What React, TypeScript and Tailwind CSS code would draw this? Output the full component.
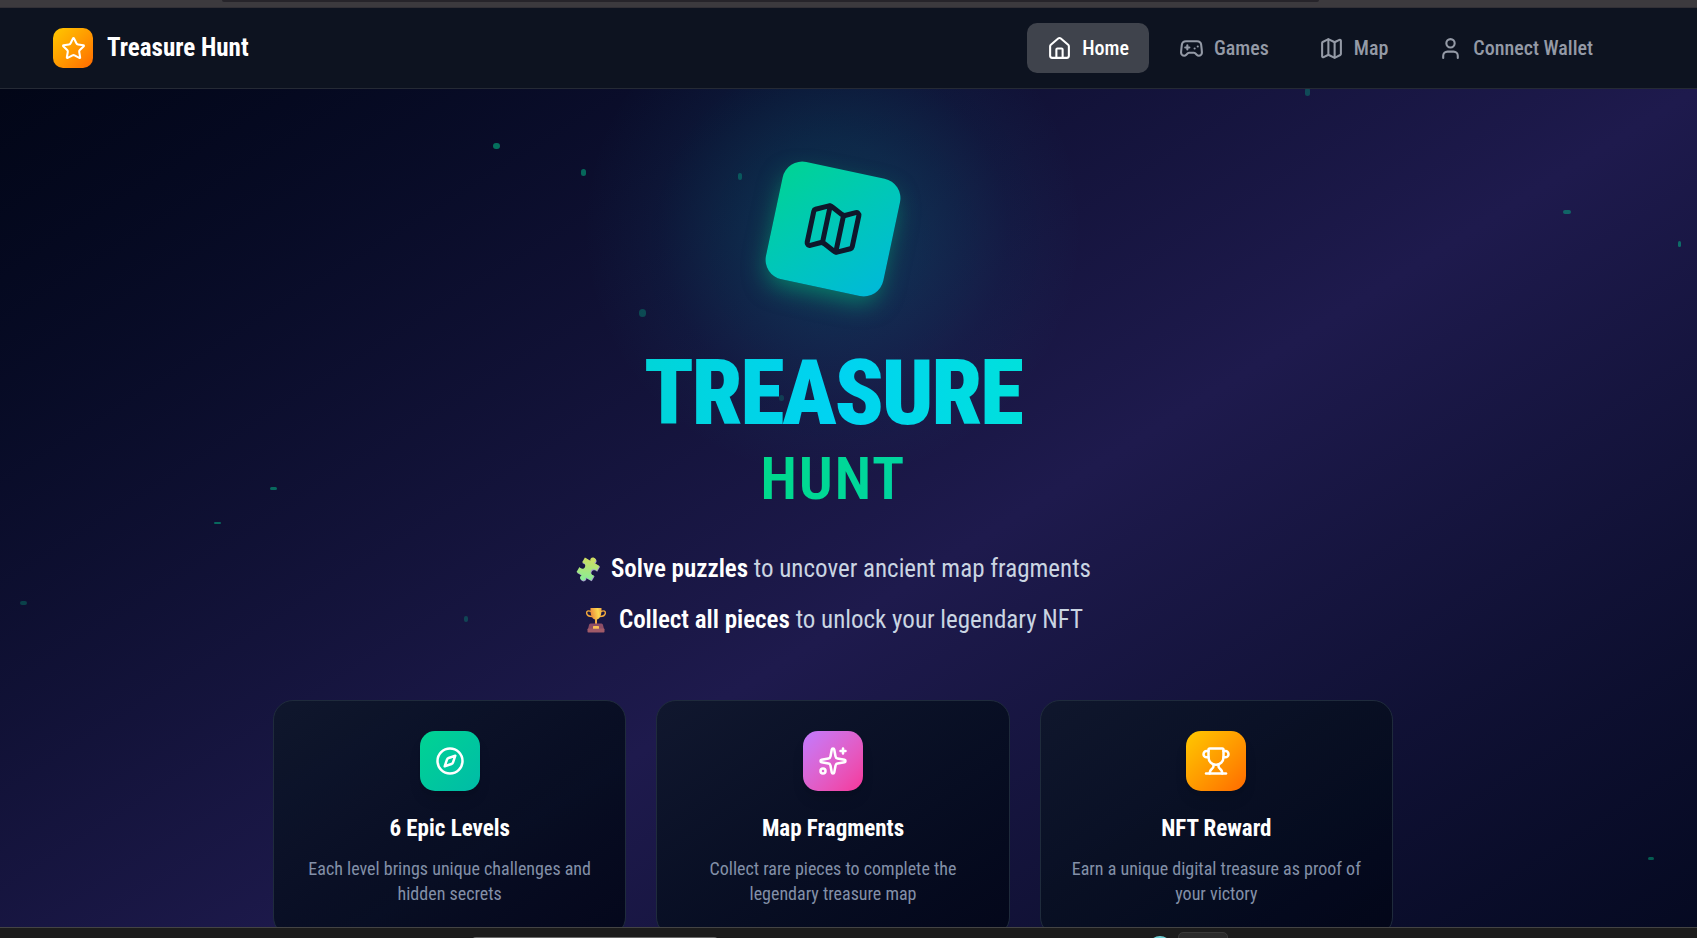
import {
  Compass,
  Gamepad2,
  House,
  Map as MapIcon,
  Sparkles,
  Star,
  Trophy,
  User,
  type LucideIcon,
} from "lucide-react";

type NavItem = { label: string; icon: LucideIcon; active?: boolean };

const navItems: NavItem[] = [
  { label: "Home", icon: House, active: true },
  { label: "Games", icon: Gamepad2 },
  { label: "Map", icon: MapIcon },
  { label: "Connect Wallet", icon: User },
];

const features = [
  {
    title: "6 Epic Levels",
    text: "Each level brings unique challenges and hidden secrets",
    icon: Compass,
    tile: "from-[#00d492] to-[#00bba7]",
  },
  {
    title: "Map Fragments",
    text: "Collect rare pieces to complete the legendary treasure map",
    icon: Sparkles,
    tile: "from-[#c27aff] to-[#f6339a]",
  },
  {
    title: "NFT Reward",
    text: "Earn a unique digital treasure as proof of your victory",
    icon: Trophy,
    tile: "from-[#ffc800] to-[#ff6900]",
  },
];

// Floating particles: left, top, width, height and opacity, relative to the hero.
const particles = [
  [493, 54, 7, 6, 0.5],
  [581, 80, 5, 7, 0.45],
  [738, 84, 4, 7, 0.3],
  [639, 220, 7, 8, 0.28],
  [779, 306, 5, 6, 0.2],
  [1305, -1, 5, 8, 0.28],
  [1563, 121, 8, 4, 0.4],
  [1678, 152, 3, 6, 0.45],
  [270, 398, 7, 3, 0.45],
  [214, 433, 7, 2, 0.45],
  [20, 512, 7, 4, 0.25],
  [464, 527, 4, 6, 0.25],
  [1648, 768, 6, 3, 0.4],
];

const PIECE =
  "M6 5H11.200C10 3.600 10.600 .8 13 .8S16 3.600 14.800 5H20V10.600C18.400 9.600 16 10.400 16 13S18.400 16.400 20 15.400V21H14.800C16 22.400 15.400 25.200 13 25.200S10 22.400 11.200 21H6V15.400C7.600 16.400 10 15.600 10 13S7.600 9.600 6 10.600Z";

function PuzzlePiece() {
  return (
    <svg width="26" height="26" viewBox="0 0 26 26" aria-hidden="true">
      <defs>
        <linearGradient id="puzzle" x1="0.3" y1="0" x2="0.6" y2="1">
          <stop offset="0" stopColor="#d6dc5c" />
          <stop offset="1" stopColor="#84ee9a" />
        </linearGradient>
      </defs>
      <g transform="translate(13 13) rotate(30) scale(1.200 1.050) translate(-13 -13)">
        <path transform="translate(0.8 0.4)" fill="#a99bd0" d={PIECE} />
        <path fill="url(#puzzle)" d={PIECE} />
      </g>
    </svg>
  );
}

function GoldCup() {
  return (
    <svg width="26" height="26" viewBox="0 0 26 26" aria-hidden="true">
      <defs>
        <linearGradient id="cup" x1="0" x2="1" y1="0.3" y2="0">
          <stop offset="0" stopColor="#ec8a3a" />
          <stop offset="0.65" stopColor="#fcd950" />
          <stop offset="1" stopColor="#f2a640" />
        </linearGradient>
      </defs>
      <path
        d="M8 4.500C5 3 3.200 4.500 3.700 6.500S6.500 9.500 9 9.500M18 4.500C21 3 22.800 4.500 22.300 6.500S19.500 9.500 17 9.500"
        fill="none"
        stroke="#f3a93b"
        strokeWidth="1.400"
      />
      <path d="M7.500 1H18.500C18.800 7 17.500 11.500 14 12.500V17H12V12.500C8.500 11.500 7.200 7 7.500 1Z" fill="url(#cup)" />
      <path d="M6 18Q6.200 16.500 7.500 16.500H18.500Q19.800 16.500 20 18L21 22H5Z" fill="#8d4d66" />
      <rect x="4.500" y="21.500" width="17" height="4" rx="0.800" fill="#a05a68" />
      <rect x="10" y="19" width="6" height="2.800" rx="0.600" fill="#fbc155" />
    </svg>
  );
}

function Header() {
  return (
    <header className="flex h-[81px] shrink-0 items-center justify-between border-b border-[#252a35] bg-[#0d1320] pr-[84px] pl-[53px]">
      <a href="#" className="flex items-center gap-[14px]">
        <span className="grid size-10 place-items-center rounded-[10px] bg-linear-to-br from-[#ffc800] to-[#ff6900]">
          <Star className="size-[25px] text-white" />
        </span>
        <span className="text-[25px] leading-10 font-bold text-white">Treasure Hunt</span>
      </a>
      <nav className="flex items-center gap-[10px]">
        {navItems.map(({ label, icon: Icon, active }) => (
          <a
            key={label}
            href="#"
            className={
              active
                ? "flex h-[50px] items-center gap-[10px] rounded-[10px] bg-[#3f434c] px-5 text-[20px] font-medium text-white"
                : "flex h-[50px] items-center gap-[10px] rounded-[10px] px-5 text-[20px] font-medium text-[#949aa6]"
            }
          >
            <Icon className="size-[25px]" />
            {label}
          </a>
        ))}
      </nav>
    </header>
  );
}

function Hero() {
  return (
    <main className="relative flex min-h-[1064px] flex-col items-center overflow-hidden bg-linear-to-br from-[#020617] via-[#1e1a4d] to-[#020617] pt-20 pr-[31px]">
      <svg className="absolute inset-0 size-full" aria-hidden="true">
        {particles.map(([x, y, width, height, opacity]) => (
          <rect key={`${x}-${y}`} x={x} y={y} width={width} height={height} rx={Math.min(width, height) / 2} fill="#00d492" opacity={opacity} />
        ))}
      </svg>

      <div className="relative">
        <div className="absolute -inset-[190px] rounded-full bg-[radial-gradient(closest-side,rgba(0,184,180,0.2),rgba(0,184,200,0.14)_35%,rgba(0,184,219,0.04)_70%,transparent)]" />
        <div className="relative grid size-[120px] rotate-12 place-items-center rounded-[20px] bg-linear-to-br from-[#00d492] to-[#00b8db] shadow-[0_10px_24px_-4px_rgba(0,188,125,0.6)]">
          <MapIcon className="size-[60px] text-[#0f172b]" />
        </div>
      </div>

      <h1 className="relative mt-[60px] flex flex-col items-center gap-[10px]">
        <span className="bg-linear-to-r from-[#00d5d8] via-[#00d3f2] to-[#00e0dc] bg-clip-text text-[90px] leading-[90px] font-black tracking-tight text-transparent">
          TREASURE
        </span>
        <span className="bg-linear-to-r from-[#00da8c] to-[#00d5a0] bg-clip-text text-[60px] leading-[60px] font-semibold tracking-wide text-transparent">
          HUNT
        </span>
      </h1>

      <div className="relative mt-10 flex flex-col items-center gap-[11px] text-[25px] leading-10 text-[#cad5e2]">
        <p className="flex items-center gap-[10px]">
          <PuzzlePiece />
          <span>
            <strong className="font-semibold text-white">Solve puzzles</strong> to uncover ancient map fragments
          </span>
        </p>
        <p className="flex items-center gap-[10px]">
          <GoldCup />
          <span>
            <strong className="font-semibold text-white">Collect all pieces</strong> to unlock your legendary NFT
          </span>
        </p>
      </div>

      <section className="relative mt-[60px] grid w-full max-w-[1120px] grid-cols-3 gap-[30px]">
        {features.map(({ title, text, icon: Icon, tile }) => (
          <article
            key={title}
            className="flex flex-col items-center rounded-[20px] border border-[#1f2b3c] bg-linear-to-br from-[#0f172b]/90 to-[#020617]/90 p-[30px] text-center"
          >
            <div className={`grid size-[60px] place-items-center rounded-[15px] bg-linear-to-br shadow-lg ${tile}`}>
              <Icon className="size-[30px] text-white" />
            </div>
            <h2 className="mt-5 text-[23px] leading-[35px] font-bold text-white">{title}</h2>
            <p className="mt-[10px] text-[18px] leading-[25px] text-[#8390a8]">{text}</p>
          </article>
        ))}
      </section>
    </main>
  );
}

export default function App() {
  return (
    <div className="flex h-screen flex-col overflow-hidden bg-[#020617] font-['Roboto_Condensed',Roboto,sans-serif]">
      <div className="h-2 shrink-0 border-b border-[#323036] bg-[#3c3a3e] pr-[378px] pl-[222px]">
        <div className="h-[2px] rounded-b-[4px] bg-[#26242a]" />
      </div>
      <Header />
      <div className="min-h-0 flex-1 overflow-hidden">
        <Hero />
      </div>
      <div className="flex h-[11px] shrink-0 items-start overflow-hidden border-t border-[#444444] bg-[#1c1c1c] pl-[472px]">
        <div className="mt-[9px] h-[10px] w-[246px] rounded-t-[4px] bg-[#6a6a6a]" />
        <div className="mt-2 ml-[430px] size-6 rounded-full bg-[#6fd0d6]" />
        <div className="mt-1 ml-[6px] h-5 w-[50px] rounded-[5px] border border-[#3a3a3a] bg-[#2b2b2b]" />
      </div>
    </div>
  );
}
